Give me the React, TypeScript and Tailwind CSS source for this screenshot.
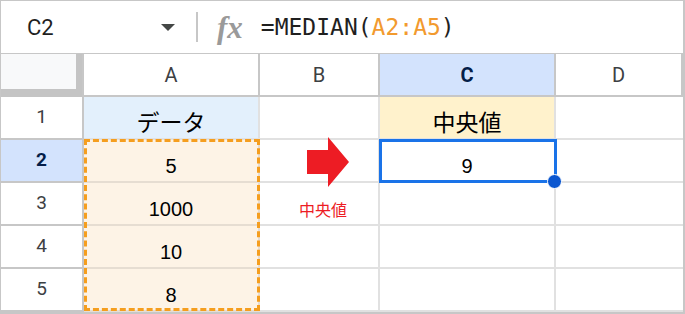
import React from "react";

const rows = [
    { n: 1, a: "データ", c: "中央値" },
    { n: 2, a: "5", c: "9" },
    { n: 3, a: "1000", c: "" },
    { n: 4, a: "10", c: "" },
    { n: 5, a: "8", c: "" },
];

const cols = ["A", "B", "C", "D"];

export default function App() {
    return (
        <div className="w-[685px] h-[314px] bg-white border border-r-2 border-b-2 border-[#c7c7c7] overflow-hidden font-['Roboto',sans-serif]">
            {/* Formula bar */}
            <div className="h-[53px] flex items-center border-b border-[#c7c7c7]">
                <div className="w-[195px] flex items-center justify-between pl-[26px] pr-[21px]">
                    <span className="text-[22px] text-[#1f1f1f]">C2</span>
                    <svg width="14" height="7" viewBox="0 0 14 7">
                        <polygon points="0,0 14,0 7,7" fill="#444746" />
                    </svg>
                </div>
                <div className="w-[2px] h-[30px] bg-[#c7c7c7]" />
                <span className="ml-[19px] mr-[18px] text-[31px] leading-none italic font-bold text-[#9a9a9a] font-['Liberation_Serif',serif]">
                    fx
                </span>
                <span className="text-[23px] text-[#1f1f1f] font-['DejaVu_Sans_Mono',monospace]">
                    =MEDIAN(<span className="text-[#f29a2e]">A2:A5</span>)
                </span>
            </div>

            {/* Sheet grid */}
            <div className="grid grid-cols-[83px_176px_120px_176px_127px] grid-rows-[43px_43px_43px_43px_43px_43px]">
                {/* Corner */}
                <div className="bg-[#c4c4c4] border-r-2 border-[#c7c7c7]">
                    <div className="w-[75px] h-[35px] bg-[#f8f9fa]" />
                </div>
                {cols.map((c) => (
                    <div
                        key={c}
                        className={
                            c === "C"
                                ? "flex items-center justify-center border-r-2 border-b-2 border-[#c7c7c7] bg-[#d3e3fd] text-[20px] font-bold text-[#041e49]"
                                : "flex items-center justify-center border-r-2 border-b-2 border-[#c7c7c7] bg-white text-[20px] text-[#3c4043]"
                        }
                    >
                        {c}
                    </div>
                ))}

                {rows.map((r) => (
                    <React.Fragment key={r.n}>
                        <div
                            className={
                                r.n === 2
                                    ? "flex items-center justify-center border-r-2 border-b-2 border-[#c7c7c7] bg-[#d3e3fd] text-[19px] font-bold text-[#041e49]"
                                    : "flex items-center justify-center border-r-2 border-b-2 border-[#c7c7c7] bg-white text-[19px] text-[#3c4043]"
                            }
                        >
                            {r.n}
                        </div>

                        {/* A */}
                        <div
                            className={
                                r.n === 1
                                    ? "relative flex items-end justify-center pb-[2px] border-r-2 border-b-2 border-[#e1e1e1] bg-[#e3f0fc] text-[23px] leading-[30px] text-black font-['Noto_Sans_CJK_JP',sans-serif]"
                                    : "relative flex items-end justify-center pb-[4px] border-r-2 border-b-2 border-[#e6ddd2] bg-[#fdf3e6] text-[20px] leading-[22px] text-black font-['Liberation_Sans',sans-serif]"
                            }
                        >
                            {r.a}
                            {r.n === 2 && (
                                <div className="absolute left-0 top-[-1px] w-[176px] h-[172px] border-[3px] border-dashed border-[#f59e1f] z-10" />
                            )}
                        </div>

                        {/* B */}
                        <div className="relative flex items-end justify-center border-r-2 border-b-2 border-[#e1e1e1] bg-white">
                            {r.n === 2 && (
                                <svg
                                    className="absolute left-[47px] top-[-3px] z-10"
                                    width="42"
                                    height="50"
                                    viewBox="0 0 42 50"
                                >
                                    <polygon points="0,13 21,13 21,0 42,25 21,50 21,37 0,37" fill="#ed1c24" />
                                </svg>
                            )}
                            {r.n === 3 && (
                                <span className="pb-[4px] pl-[8px] text-[16px] leading-[22px] text-[#ed1c24] font-['Noto_Sans_CJK_JP',sans-serif]">
                                    中央値
                                </span>
                            )}
                        </div>

                        {/* C */}
                        <div
                            className={
                                r.n === 1
                                    ? "relative flex items-end justify-center pb-[2px] border-r-2 border-b-2 border-[#e1e1e1] bg-[#fff2cc] text-[23px] leading-[30px] text-black font-['Noto_Sans_CJK_JP',sans-serif]"
                                    : "relative flex items-end justify-center pb-[4px] border-r-2 border-b-2 border-[#e1e1e1] bg-white text-[20px] leading-[22px] text-black font-['Liberation_Sans',sans-serif]"
                            }
                        >
                            {r.c}
                            {r.n === 2 && (
                                <>
                                    <div className="absolute left-[-1px] top-[-1px] w-[178px] h-[44px] border-[3px] border-[#1a73e8] z-10" />
                                    <div className="absolute left-[167px] top-[34px] w-[15px] h-[15px] rounded-full bg-[#0b57d0] border border-white z-20" />
                                </>
                            )}
                        </div>

                        {/* D */}
                        <div className="border-b-2 border-[#e1e1e1] bg-white" />
                    </React.Fragment>
                ))}
            </div>
        </div>
    );
}
